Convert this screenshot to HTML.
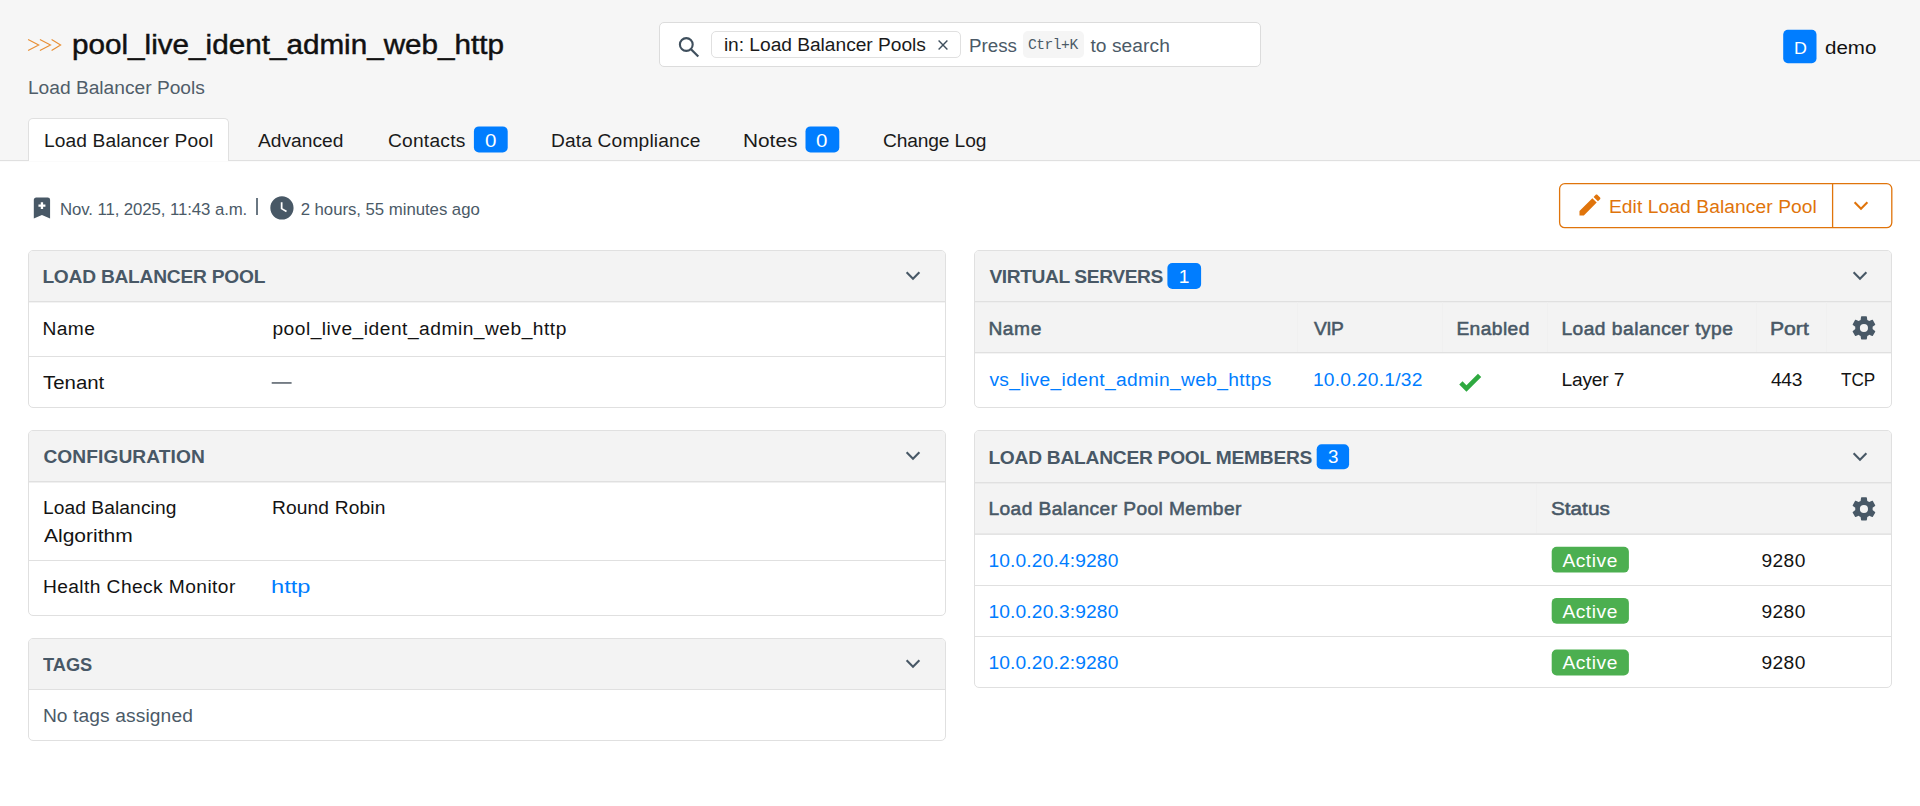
<!DOCTYPE html>
<html lang="en"><head><meta charset="utf-8"><title>pool_live_ident_admin_web_http - Load Balancer Pools</title>
<style>
html,body{margin:0;padding:0;background:#ffffff;}
body{width:1920px;height:806px;position:relative;overflow:hidden;font-family:"Liberation Sans",sans-serif;}
.a{position:absolute;display:block;}
.t{position:absolute;white-space:nowrap;line-height:1;font-family:"Liberation Sans",sans-serif;}
.p{position:absolute;box-sizing:border-box;border:1px solid #e0e0e0;border-radius:5px;background:#ffffff;overflow:hidden;}
.ph{box-sizing:border-box;background:#f3f3f3;border-bottom:1px solid #e0e0e0;}
</style></head>
<body>
<div class="a" style="left:0px;top:0px;width:1920px;height:160px;background:#f6f6f6;"></div>
<div class="a" style="left:0px;top:160px;width:1920px;height:1px;background:#e0e0e0"></div>
<div class="a" style="left:0px;top:161px;width:1920px;height:1px;background:#fbfbfb"></div>
<svg class="a" style="left:22px;top:32px" width="46" height="26" viewBox="22 32 46 26"><g fill="none" stroke="#e88f35" stroke-width="1.15"><path d="M28.1 39.5 L38.7 45 L28.1 50.5"/><path d="M39.9 39.5 L50.5 45 L39.9 50.5"/><path d="M51.6 39.5 L60.6 45 L51.6 50.5"/></g></svg>
<span class="t" id="t0" style="left:72.40px;top:31.89px;font-size:27.0px;color:#111111;transform:scaleX(1.0986);transform-origin:0 0;-webkit-text-stroke:0.45px #111;">pool_live_ident_admin_web_http</span>
<span class="t" id="t1" style="left:27.90px;top:77.95px;font-size:19.2px;color:#505d69;letter-spacing:-0.006px;">Load Balancer Pools</span>
<div class="a" style="left:659px;top:22px;width:602px;height:45px;background:#ffffff;border:1px solid #dcdcdc;border-radius:5px;box-sizing:border-box"></div>
<svg class="a" style="left:677px;top:35px" width="24" height="24" viewBox="0 0 24 24"><circle cx="9.3" cy="9.5" r="6.4" fill="none" stroke="#3f4f5d" stroke-width="2.1"/><path d="M14 14.2 L21.3 21.5" stroke="#3f4f5d" stroke-width="2.25" fill="none"/></svg>
<div class="a" style="left:711px;top:31px;width:250px;height:27px;background:#ffffff;border:1px solid #e0e0e0;border-radius:5px;box-sizing:border-box"></div>
<span class="t" id="t2" style="left:723.90px;top:35.25px;font-size:19.2px;color:#1a1a1a;letter-spacing:-0.032px;">in: Load Balancer Pools</span>
<svg class="a" style="left:937.1px;top:38.7px" width="12" height="12" viewBox="0 0 12 12"><path d="M1.6 1.6 L10.4 10.4 M10.4 1.6 L1.6 10.4" stroke="#3f4f5d" stroke-width="1.4" fill="none"/></svg>
<span class="t" id="t3" style="left:969.40px;top:35.95px;font-size:19.2px;color:#4b5a67;transform:scaleX(0.9757);transform-origin:0 0;">Press</span>
<div class="a" style="left:1023px;top:31px;width:61px;height:26.5px;background:#f5f5f5;border-radius:5px"></div>
<span class="t" id="t4" style="left:1027.90px;top:38.02px;font-size:14.6px;color:#4b5a67;font-family:'Liberation Mono', monospace;letter-spacing:-0.453px;">Ctrl+K</span>
<span class="t" id="t5" style="left:1090.40px;top:35.95px;font-size:19.2px;color:#4b5a67;letter-spacing:0.066px;">to search</span>
<svg class="a" style="left:1780px;top:26px" width="40" height="40" viewBox="1780 26 40 40"><rect x="1783.2" y="29.8" width="33.3" height="33.4" rx="4.6" fill="#007dff"/></svg>
<span class="t" id="t6" style="left:1794.40px;top:39.76px;font-size:17.3px;color:#ffffff;transform:scaleX(1.0324);transform-origin:0 0;">D</span>
<span class="t" id="t7" style="left:1825.40px;top:37.50px;font-size:19.2px;color:#111111;transform:scaleX(1.0694);transform-origin:0 0;">demo</span>
<div class="a" style="left:28px;top:118px;width:201px;height:43px;background:#ffffff;border:1px solid #e0e0e0;border-bottom:none;border-radius:5px 5px 0 0;box-sizing:border-box"></div>
<span class="t" id="t8" style="left:43.90px;top:130.95px;font-size:19.2px;color:#1a1a1a;letter-spacing:0.117px;">Load Balancer Pool</span>
<span class="t" id="t9" style="left:257.90px;top:130.95px;font-size:19.2px;color:#1a1a1a;letter-spacing:0.018px;">Advanced</span>
<span class="t" id="t10" style="left:387.90px;top:130.95px;font-size:19.2px;color:#1a1a1a;letter-spacing:0.248px;">Contacts</span>
<svg class="a" style="left:471px;top:124px" width="39" height="32" viewBox="471 124 39 32"><rect x="473.9" y="126.4" width="33.8" height="26.1" rx="5" fill="#007dff"/></svg>
<span class="t" id="t11" style="left:485.40px;top:130.65px;font-size:19.2px;color:#ffffff;transform:scaleX(1.0670);transform-origin:0 0;">0</span>
<span class="t" id="t12" style="left:550.90px;top:130.95px;font-size:19.2px;color:#1a1a1a;letter-spacing:0.163px;">Data Compliance</span>
<span class="t" id="t13" style="left:743.40px;top:130.95px;font-size:19.2px;color:#1a1a1a;transform:scaleX(1.0846);transform-origin:0 0;">Notes</span>
<svg class="a" style="left:803px;top:124px" width="39" height="32" viewBox="803 124 39 32"><rect x="805.5" y="126.4" width="33.8" height="26.1" rx="5" fill="#007dff"/></svg>
<span class="t" id="t14" style="left:816.40px;top:130.65px;font-size:19.2px;color:#ffffff;transform:scaleX(1.0670);transform-origin:0 0;">0</span>
<span class="t" id="t15" style="left:882.90px;top:130.95px;font-size:19.2px;color:#1a1a1a;letter-spacing:-0.122px;">Change Log</span>
<svg class="a" style="left:27.9px;top:194px" width="27.9" height="27.9" viewBox="0 0 24 24"><path fill="#485866" d="M17,3A2,2 0 0,1 19,5V21L12,18L5,21V5C5,3.89 5.9,3 7,3H17M11,7V9H9V11H11V13H13V11H15V9H13V7H11Z" /></svg>
<span class="t" id="t16" style="left:59.90px;top:201.68px;font-size:16.8px;color:#4b5a67;letter-spacing:-0.083px;">Nov. 11, 2025, 11:43 a.m.</span>
<div class="a" style="left:256.4px;top:198px;width:1.3px;height:16.6px;background:#6a7782;"></div>
<svg class="a" style="left:268.4px;top:193.7px" width="27.9" height="27.9" viewBox="0 0 24 24"><path fill="#485866" d="M12,2C6.5,2 2,6.5 2,12C2,17.5 6.5,22 12,22C17.5,22 22,17.5 22,12C22,6.5 17.5,2 12,2M15.55,15.8L11,13V7H12.5V12.2L16.3,14.5L15.55,15.8Z"/></svg>
<span class="t" id="t17" style="left:300.65px;top:201.68px;font-size:16.8px;color:#4b5a67;letter-spacing:-0.042px;">2 hours, 55 minutes ago</span>
<svg class="a" style="left:1556px;top:180px" width="340" height="52" viewBox="1556 180 340 52"><rect x="1559.6" y="183.6" width="332.2" height="44.1" rx="5.2" fill="#ffffff" stroke="#e0740b" stroke-width="1.3"/><path d="M1832.6 183.6 V227.7" stroke="#e0740b" stroke-width="1.3" fill="none"/></svg>
<svg class="a" style="left:1575.5px;top:190.8px" width="27.9" height="27.9" viewBox="0 0 24 24"><path fill="#e0740b" d="M20.71,7.04C21.1,6.65 21.1,6 20.71,5.63L18.37,3.29C18,2.9 17.35,2.9 16.96,3.29L15.12,5.12L18.87,8.87M3,17.25V21H6.75L17.81,9.93L14.06,6.18L3,17.25Z"/></svg>
<span class="t" id="t18" style="left:1608.90px;top:196.75px;font-size:19.2px;color:#e0740b;letter-spacing:0.095px;">Edit Load Balancer Pool</span>
<svg class="a" style="left:1853.4px;top:200.8px" width="16" height="10" viewBox="0 0 16 10"><path d="M1.6 1.3 L8 7.7 L14.4 1.3" fill="none" stroke="#e0740b" stroke-width="2.1"/></svg>
<div class="p" style="left:28px;top:250px;width:918px;height:157.5px"><div class="ph" style="height:51px"></div></div>
<div class="a" style="left:29px;top:302px;width:916px;height:1px;background:#f3f3f3"></div>
<span class="t" id="t19" style="left:42.40px;top:267.25px;font-size:19.2px;color:#485866;font-weight:700;letter-spacing:-0.240px;">LOAD BALANCER POOL</span>
<svg class="a" style="left:905.3px;top:270.8px" width="16" height="10" viewBox="0 0 16 10"><path d="M1.6 1.3 L8 7.7 L14.4 1.3" fill="none" stroke="#485866" stroke-width="2.1"/></svg>
<span class="t" id="t20" style="left:42.40px;top:318.65px;font-size:19.2px;color:#131313;letter-spacing:0.427px;">Name</span>
<span class="t" id="t21" style="left:272.40px;top:318.65px;font-size:19.2px;color:#131313;letter-spacing:0.499px;">pool_live_ident_admin_web_http</span>
<div class="a" style="left:29px;top:356px;width:916px;height:1px;background:#e0e0e0"></div>
<span class="t" id="t22" style="left:43.40px;top:372.75px;font-size:19.2px;color:#131313;transform:scaleX(1.0635);transform-origin:0 0;">Tenant</span>
<svg class="a" style="left:271px;top:380px" width="22" height="6" viewBox="0 0 22 6"><path d="M0.7 2.95 H20.6" stroke="#4a555f" stroke-width="1.45" fill="none"/></svg>
<div class="p" style="left:28px;top:430px;width:918px;height:185.5px"><div class="ph" style="height:51px"></div></div>
<div class="a" style="left:29px;top:482px;width:916px;height:1px;background:#f0f0f0"></div>
<span class="t" id="t23" style="left:43.40px;top:447.05px;font-size:19.2px;color:#485866;font-weight:700;letter-spacing:0.073px;">CONFIGURATION</span>
<svg class="a" style="left:905.3px;top:450.8px" width="16" height="10" viewBox="0 0 16 10"><path d="M1.6 1.3 L8 7.7 L14.4 1.3" fill="none" stroke="#485866" stroke-width="2.1"/></svg>
<span class="t" id="t24" style="left:42.90px;top:498.05px;font-size:19.2px;color:#131313;letter-spacing:0.090px;">Load Balancing</span>
<span class="t" id="t25" style="left:43.90px;top:525.75px;font-size:19.2px;color:#131313;transform:scaleX(1.0953);transform-origin:0 0;">Algorithm</span>
<span class="t" id="t26" style="left:271.90px;top:498.05px;font-size:19.2px;color:#131313;letter-spacing:0.145px;">Round Robin</span>
<div class="a" style="left:29px;top:560px;width:916px;height:1px;background:#e0e0e0"></div>
<span class="t" id="t27" style="left:42.90px;top:576.55px;font-size:19.2px;color:#131313;letter-spacing:0.419px;">Health Check Monitor</span>
<span class="t" id="t28" style="left:271.40px;top:576.55px;font-size:19.2px;color:#007dff;transform:scaleX(1.2331);transform-origin:0 0;">http</span>
<div class="p" style="left:28px;top:638px;width:918px;height:103px"><div class="ph" style="height:51px"></div></div>
<span class="t" id="t29" style="left:43.40px;top:654.65px;font-size:19.2px;color:#485866;font-weight:700;transform:scaleX(0.9498);transform-origin:0 0;">TAGS</span>
<svg class="a" style="left:905.3px;top:658.8px" width="16" height="10" viewBox="0 0 16 10"><path d="M1.6 1.3 L8 7.7 L14.4 1.3" fill="none" stroke="#485866" stroke-width="2.1"/></svg>
<span class="t" id="t30" style="left:42.90px;top:705.95px;font-size:19.2px;color:#4b5a67;letter-spacing:0.113px;">No tags assigned</span>
<div class="p" style="left:974px;top:250px;width:918px;height:157.5px"><div class="ph" style="height:51px"></div></div>
<div class="a" style="left:975px;top:302px;width:916px;height:50px;background:#f3f3f3;"></div>
<div class="a" style="left:975px;top:302px;width:916px;height:1px;background:#eeeeee"></div>
<div class="a" style="left:975px;top:352px;width:916px;height:1px;background:#e0e0e0"></div>
<div class="a" style="left:975px;top:353px;width:916px;height:1px;background:#f4f4f4"></div>
<div class="a" style="left:1297px;top:302px;width:1px;height:50px;background:#f0f0f0"></div>
<div class="a" style="left:1442px;top:302px;width:1px;height:50px;background:#f0f0f0"></div>
<div class="a" style="left:1547px;top:302px;width:1px;height:50px;background:#f0f0f0"></div>
<div class="a" style="left:1756px;top:302px;width:1px;height:50px;background:#f0f0f0"></div>
<div class="a" style="left:1826px;top:302px;width:1px;height:50px;background:#f0f0f0"></div>
<span class="t" id="t31" style="left:989.40px;top:267.25px;font-size:19.2px;color:#485866;font-weight:700;letter-spacing:-0.394px;">VIRTUAL SERVERS</span>
<svg class="a" style="left:1165px;top:261px" width="39" height="31" viewBox="1165 261 39 31"><rect x="1167.4" y="263.0" width="33.7" height="26.0" rx="5" fill="#007dff"/></svg>
<span class="t" id="t32" style="left:1178.75px;top:267.25px;font-size:19.2px;color:#ffffff;">1</span>
<svg class="a" style="left:1851.6px;top:270.8px" width="16" height="10" viewBox="0 0 16 10"><path d="M1.6 1.3 L8 7.7 L14.4 1.3" fill="none" stroke="#485866" stroke-width="2.1"/></svg>
<span class="t" id="t33" style="left:988.40px;top:318.65px;font-size:19.2px;color:#485866;letter-spacing:0.594px;-webkit-text-stroke:0.55px #485866;">Name</span>
<span class="t" id="t34" style="left:1313.90px;top:318.65px;font-size:19.2px;color:#485866;letter-spacing:-0.485px;-webkit-text-stroke:0.55px #485866;">VIP</span>
<span class="t" id="t35" style="left:1456.40px;top:318.65px;font-size:19.2px;color:#485866;letter-spacing:0.424px;-webkit-text-stroke:0.55px #485866;">Enabled</span>
<span class="t" id="t36" style="left:1561.40px;top:318.65px;font-size:19.2px;color:#485866;letter-spacing:0.485px;-webkit-text-stroke:0.55px #485866;">Load balancer type</span>
<span class="t" id="t37" style="left:1770.40px;top:318.65px;font-size:19.2px;color:#485866;transform:scaleX(1.1013);transform-origin:0 0;-webkit-text-stroke:0.55px #485866;">Port</span>
<svg class="a" style="left:1849.8px;top:313.7px" width="27.9" height="27.9" viewBox="0 0 24 24"><path fill="#485866" d="M12,15.5A3.5,3.5 0 0,1 8.5,12A3.5,3.5 0 0,1 12,8.5A3.5,3.5 0 0,1 15.5,12A3.5,3.5 0 0,1 12,15.5M19.43,12.97C19.47,12.65 19.5,12.33 19.5,12C19.5,11.67 19.47,11.34 19.43,11L21.54,9.37C21.73,9.22 21.78,8.95 21.66,8.73L19.66,5.27C19.54,5.05 19.27,4.96 19.05,5.05L16.56,6.05C16.04,5.66 15.5,5.32 14.87,5.07L14.5,2.42C14.46,2.18 14.25,2 14,2H10C9.75,2 9.54,2.18 9.5,2.42L9.13,5.07C8.5,5.32 7.96,5.66 7.44,6.05L4.95,5.05C4.73,4.96 4.46,5.05 4.34,5.27L2.34,8.73C2.21,8.95 2.27,9.22 2.46,9.37L4.57,11C4.53,11.34 4.5,11.67 4.5,12C4.5,12.33 4.53,12.65 4.57,12.97L2.46,14.63C2.27,14.78 2.21,15.05 2.34,15.27L4.34,18.73C4.46,18.95 4.73,19.03 4.95,18.95L7.44,17.94C7.96,18.34 8.5,18.68 9.13,18.93L9.5,21.58C9.54,21.82 9.75,22 10,22H14C14.25,22 14.46,21.82 14.5,21.58L14.87,18.93C15.5,18.67 16.04,18.34 16.56,17.94L19.05,18.95C19.27,19.03 19.54,18.95 19.66,18.73L21.66,15.27C21.78,15.05 21.73,14.78 21.54,14.63L19.43,12.97Z"/></svg>
<span class="t" id="t38" style="left:989.40px;top:369.65px;font-size:19.2px;color:#007dff;letter-spacing:0.356px;">vs_live_ident_admin_web_https</span>
<span class="t" id="t39" style="left:1312.90px;top:369.65px;font-size:19.2px;color:#007dff;letter-spacing:0.251px;">10.0.20.1/32</span>
<svg class="a" style="left:1456.3px;top:368.4px" width="27.9" height="27.9" viewBox="0 0 24 24"><path fill="#2fa940" d="M9,20.42L2.79,14.21L5.62,11.38L9,14.77L18.88,4.88L21.71,7.71L9,20.42Z"/></svg>
<span class="t" id="t40" style="left:1561.40px;top:369.65px;font-size:19.2px;color:#131313;letter-spacing:-0.172px;">Layer 7</span>
<span class="t" id="t41" style="left:1770.90px;top:369.65px;font-size:19.2px;color:#131313;letter-spacing:-0.274px;">443</span>
<span class="t" id="t42" style="left:1840.90px;top:369.65px;font-size:19.2px;color:#131313;transform:scaleX(0.8935);transform-origin:0 0;">TCP</span>
<div class="p" style="left:974px;top:430px;width:918px;height:258px"><div class="ph" style="height:52px"></div></div>
<div class="a" style="left:975px;top:483px;width:916px;height:1px;background:#ebebeb"></div>
<div class="a" style="left:975px;top:484px;width:916px;height:50px;background:#f3f3f3;"></div>
<div class="a" style="left:975px;top:533px;width:916px;height:1px;background:#e8e8e8"></div>
<div class="a" style="left:975px;top:534px;width:916px;height:1px;background:#e4e4e4"></div>
<div class="a" style="left:1536px;top:484px;width:1px;height:49px;background:#f0f0f0"></div>
<span class="t" id="t43" style="left:988.40px;top:447.75px;font-size:19.2px;color:#485866;font-weight:700;letter-spacing:-0.246px;">LOAD BALANCER POOL MEMBERS</span>
<svg class="a" style="left:1314px;top:442px" width="38" height="30" viewBox="1314 442 38 30"><rect x="1316.7" y="444.3" width="32.4" height="24.9" rx="5" fill="#007dff"/></svg>
<span class="t" id="t44" style="left:1328.40px;top:447.35px;font-size:19.2px;color:#ffffff;transform:scaleX(0.9791);transform-origin:0 0;">3</span>
<svg class="a" style="left:1851.6px;top:451.5px" width="16" height="10" viewBox="0 0 16 10"><path d="M1.6 1.3 L8 7.7 L14.4 1.3" fill="none" stroke="#485866" stroke-width="2.1"/></svg>
<span class="t" id="t45" style="left:988.40px;top:499.25px;font-size:19.2px;color:#485866;letter-spacing:0.408px;-webkit-text-stroke:0.55px #485866;">Load Balancer Pool Member</span>
<span class="t" id="t46" style="left:1550.90px;top:499.25px;font-size:19.2px;color:#485866;transform:scaleX(1.0805);transform-origin:0 0;-webkit-text-stroke:0.55px #485866;">Status</span>
<svg class="a" style="left:1850.0px;top:494.7px" width="27.9" height="27.9" viewBox="0 0 24 24"><path fill="#485866" d="M12,15.5A3.5,3.5 0 0,1 8.5,12A3.5,3.5 0 0,1 12,8.5A3.5,3.5 0 0,1 15.5,12A3.5,3.5 0 0,1 12,15.5M19.43,12.97C19.47,12.65 19.5,12.33 19.5,12C19.5,11.67 19.47,11.34 19.43,11L21.54,9.37C21.73,9.22 21.78,8.95 21.66,8.73L19.66,5.27C19.54,5.05 19.27,4.96 19.05,5.05L16.56,6.05C16.04,5.66 15.5,5.32 14.87,5.07L14.5,2.42C14.46,2.18 14.25,2 14,2H10C9.75,2 9.54,2.18 9.5,2.42L9.13,5.07C8.5,5.32 7.96,5.66 7.44,6.05L4.95,5.05C4.73,4.96 4.46,5.05 4.34,5.27L2.34,8.73C2.21,8.95 2.27,9.22 2.46,9.37L4.57,11C4.53,11.34 4.5,11.67 4.5,12C4.5,12.33 4.53,12.65 4.57,12.97L2.46,14.63C2.27,14.78 2.21,15.05 2.34,15.27L4.34,18.73C4.46,18.95 4.73,19.03 4.95,18.95L7.44,17.94C7.96,18.34 8.5,18.68 9.13,18.93L9.5,21.58C9.54,21.82 9.75,22 10,22H14C14.25,22 14.46,21.82 14.5,21.58L14.87,18.93C15.5,18.67 16.04,18.34 16.56,17.94L19.05,18.95C19.27,19.03 19.54,18.95 19.66,18.73L21.66,15.27C21.78,15.05 21.73,14.78 21.54,14.63L19.43,12.97Z"/></svg>
<span class="t" id="t47" style="left:988.40px;top:550.95px;font-size:19.2px;color:#007dff;letter-spacing:0.148px;">10.0.20.4:9280</span>
<svg class="a" style="left:1549px;top:544px" width="83" height="31" viewBox="1549 544 83 31"><rect x="1551.7" y="546.8" width="77.2" height="25.8" rx="5" fill="#4caf50"/></svg>
<span class="t" id="t48" style="left:1562.40px;top:550.95px;font-size:19.2px;color:#ffffff;letter-spacing:0.540px;">Active</span>
<span class="t" id="t49" style="left:1761.40px;top:550.95px;font-size:19.2px;color:#131313;letter-spacing:0.427px;">9280</span>
<div class="a" style="left:975px;top:585px;width:916px;height:1px;background:#e0e0e0"></div>
<span class="t" id="t50" style="left:988.40px;top:601.95px;font-size:19.2px;color:#007dff;letter-spacing:0.148px;">10.0.20.3:9280</span>
<svg class="a" style="left:1549px;top:595px" width="83" height="31" viewBox="1549 595 83 31"><rect x="1551.7" y="597.9" width="77.2" height="25.8" rx="5" fill="#4caf50"/></svg>
<span class="t" id="t51" style="left:1562.40px;top:601.95px;font-size:19.2px;color:#ffffff;letter-spacing:0.540px;">Active</span>
<span class="t" id="t52" style="left:1761.40px;top:601.95px;font-size:19.2px;color:#131313;letter-spacing:0.427px;">9280</span>
<div class="a" style="left:975px;top:636px;width:916px;height:1px;background:#e0e0e0"></div>
<span class="t" id="t53" style="left:988.40px;top:652.65px;font-size:19.2px;color:#007dff;letter-spacing:0.148px;">10.0.20.2:9280</span>
<svg class="a" style="left:1549px;top:647px" width="83" height="31" viewBox="1549 647 83 31"><rect x="1551.7" y="649.6" width="77.2" height="25.8" rx="5" fill="#4caf50"/></svg>
<span class="t" id="t54" style="left:1562.40px;top:652.65px;font-size:19.2px;color:#ffffff;letter-spacing:0.540px;">Active</span>
<span class="t" id="t55" style="left:1761.40px;top:652.65px;font-size:19.2px;color:#131313;letter-spacing:0.427px;">9280</span>
</body></html>
